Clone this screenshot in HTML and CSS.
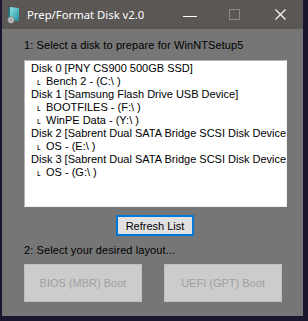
FILE: index.html
```html
<!DOCTYPE html>
<html lang="en">
<head>
    <meta charset="UTF-8">
    <title>Prep/Format Disk v2.0</title>
    <link rel="stylesheet" href="styles.css">
</head>
<body>
    <div class="window">
        <!-- Title bar -->
        <div class="titlebar">
            <svg class="app-icon" width="14" height="18" viewBox="0 0 14 18">
                <defs>
                    <linearGradient id="teal" x1="0" y1="0" x2="1" y2="1">
                        <stop offset="0" stop-color="#8fe3e8"/>
                        <stop offset="1" stop-color="#1d8f9c"/>
                    </linearGradient>
                </defs>
                <path d="M3 1 L12 2 L12 15 L3 14 Z" fill="url(#teal)"/>
                <path d="M1 3 L3 1 L3 14 L1 16 Z" fill="#2a6f78"/>
                <circle cx="4" cy="14" r="3.2" fill="#c9c9c9" stroke="#7d7d7d" stroke-width="0.8"/>
                <circle cx="4" cy="14" r="0.9" fill="#6b6b6b"/>
            </svg>
            <span class="title">Prep/Format Disk v2.0</span>
            <div class="controls">
                <span class="ctrl min"></span>
                <span class="ctrl max"></span>
                <svg class="ctrl close" width="11" height="11" viewBox="0 0 11 11">
                    <path d="M0.5 0.5 L10.5 10.5 M10.5 0.5 L0.5 10.5" stroke="#ffffff" stroke-width="1.1"/>
                </svg>
            </div>
        </div>

        <!-- Client area -->
        <div class="client">
            <div class="label">1: Select a disk to prepare for WinNTSetup5</div>
            <ul class="disk-list">
                <li>Disk 0 [PNY CS900 500GB SSD]</li>
                <li class="part"><span class="branch">ʟ</span>Bench 2 - (C:\ )</li>
                <li>Disk 1 [Samsung Flash Drive USB Device]</li>
                <li class="part"><span class="branch">ʟ</span>BOOTFILES - (F:\ )</li>
                <li class="part"><span class="branch">ʟ</span>WinPE Data - (Y:\ )</li>
                <li>Disk 2 [Sabrent Dual SATA Bridge SCSI Disk Device]</li>
                <li class="part"><span class="branch">ʟ</span>OS - (E:\ )</li>
                <li>Disk 3 [Sabrent Dual SATA Bridge SCSI Disk Device]</li>
                <li class="part"><span class="branch">ʟ</span>OS - (G:\ )</li>
            </ul>
            <button class="refresh-btn">Refresh List</button>
            <div class="label label-layout">2: Select your desired layout...</div>
            <div class="boot-row">
                <button class="boot-btn" disabled>BIOS (MBR) Boot</button>
                <button class="boot-btn" disabled>UEFI (GPT) Boot</button>
            </div>
        </div>
    </div>
</body>
</html>
```

FILE: styles.css
```css
* {
    margin: 0;
    padding: 0;
    box-sizing: border-box;
}
:root {
    --desktop: #1b1630;
    --title-bg: #5a5754;
    --client-bg: #767676;
    --text: #000000;
    --accent: #0078d7;
}
body {
    background: var(--desktop);
    font-family: "Liberation Sans", Arial, sans-serif;
    width: 308px;
    height: 321px;
    overflow: hidden;
}
/* Window frame */
.window {
    width: 301px;
    height: 316px;
    margin-left: 2px;
    display: flex;
    flex-direction: column;
    background: var(--client-bg);
}
.titlebar {
    height: 29px;
    background: var(--title-bg);
    display: flex;
    align-items: center;
    padding-left: 5px;
    color: #ffffff;
}
.app-icon {
    margin-right: 6px;
    margin-top: 1px;
}
.title {
    font-family: "Noto Sans", "Open Sans", sans-serif;
    font-size: 11.3px;
}
.controls {
    margin-left: auto;
    display: flex;
    align-items: center;
    height: 100%;
}
.ctrl {
    display: block;
}
.min {
    width: 14px;
    height: 1px;
    background: #ffffff;
    margin-right: 32px;
    margin-top: 3px;
}
.max {
    width: 11px;
    height: 11px;
    border: 1px solid #8d8b88;
    margin-right: 35px;
}
.close {
    margin-right: 17px;
}
/* Client */
.client {
    flex: 1;
    display: flex;
    flex-direction: column;
    padding: 10px 14px 0 22px;
    font-size: 11px;
    color: var(--text);
}
.label {
    height: 13px;
    line-height: 13px;
    white-space: nowrap;
    letter-spacing: 0.1px;
}
.disk-list {
    list-style: none;
    margin-top: 8px;
    width: 263px;
    height: 147px;
    background: #ffffff;
    border: 1px solid #b4b4b4;
    border-right-color: #f0f0f0;
    border-bottom-color: #f0f0f0;
    padding: 1px 0 0 6px;
    overflow: hidden;
}
.disk-list li {
    height: 13px;
    line-height: 13px;
    white-space: nowrap;
}
.disk-list .part {
    padding-left: 6px;
}
.branch {
    display: inline-block;
    width: 9px;
    font-size: 9px;
}
.refresh-btn {
    align-self: flex-start;
    margin: 8px 0 0 92px;
    width: 78px;
    height: 21px;
    background: #e1e1e1;
    border: 2px solid var(--accent);
    font-family: inherit;
    font-size: 11px;
    color: #000000;
}
.label-layout {
    margin-top: 8px;
}
.boot-row {
    display: flex;
    gap: 22px;
    margin-top: 7px;
}
.boot-btn {
    width: 118px;
    height: 38px;
    background: #cccccc;
    border: 1px solid #bfbfbf;
    color: #a0a0a0;
    font-family: inherit;
    font-size: 11px;
}
```
